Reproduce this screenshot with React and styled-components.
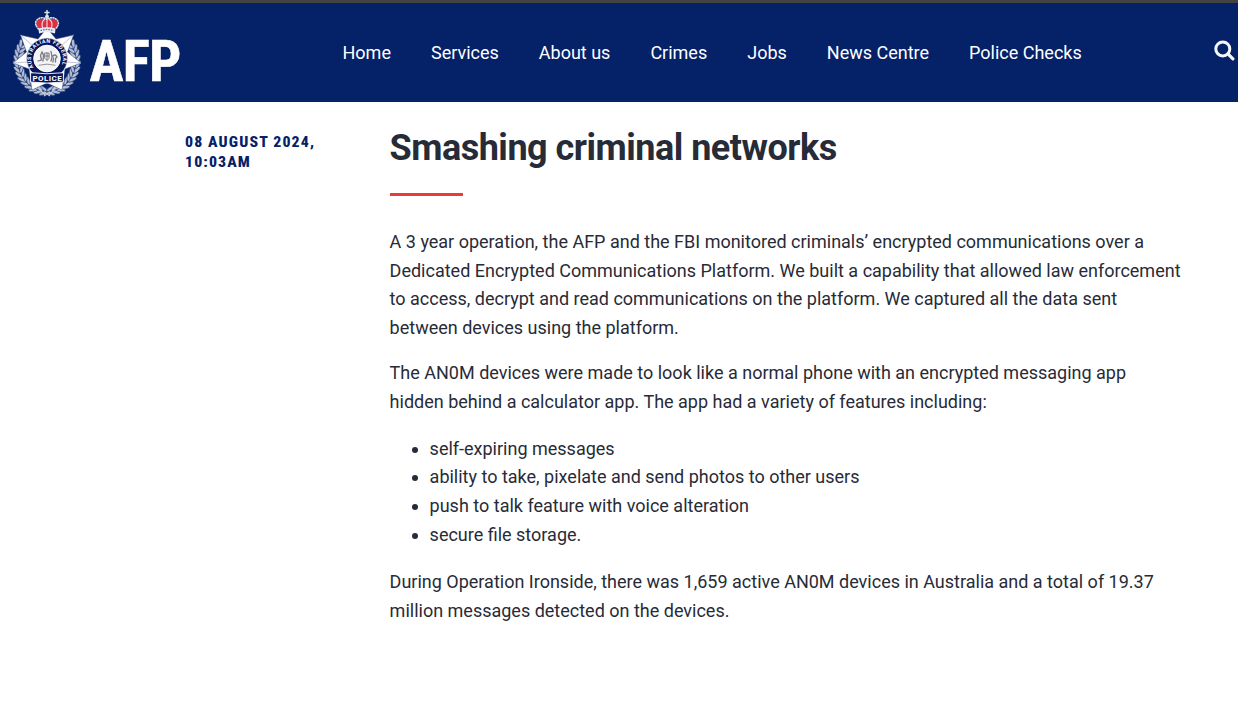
import React from "react";
import styled, { createGlobalStyle } from "styled-components";

const GlobalStyle = createGlobalStyle`
  * { box-sizing: border-box; }
  html, body { margin: 0; padding: 0; background: #fff; }
  body {
    font-family: Roboto, "Liberation Sans", sans-serif;
    font-size: 18px;
    line-height: 28.8px;
    color: #272b37;
    overflow: hidden;
  }
`;

const Header = styled.header`
  display: flex;
  align-items: center;
  height: 102px;
  background: #052168;
  border-top: 3px solid #434343;
`;

const Brand = styled.a`
  display: flex;
  flex: none;
  align-items: flex-start;
  width: 190px;
  height: 99px;
`;

const Wordmark = styled.span`
  margin: 26px 0 0 0.5px;
  color: #fff;
  font-family: "Roboto Condensed", Roboto, sans-serif;
  font-stretch: 75%;
  font-size: 57px;
  line-height: 66px;
  font-weight: 700;
  letter-spacing: -0.8px;
  -webkit-text-stroke: 0.5px #fff;
`;

const Nav = styled.nav`
  display: flex;
  flex: 1;
  gap: 40px;
  padding: 2px 0 0 152.5px;
`;

const NavLink = styled.a`
  color: #fff;
  white-space: nowrap;
`;

const SearchButton = styled.button`
  display: flex;
  flex: none;
  width: 24px;
  height: 24px;
  margin-top: -3px;
  padding: 1px 0 0 0;
  border: 0;
  background: none;
`;

const Page = styled.main`
  display: grid;
  grid-template-columns: 204.3px 800px;
  padding: 25px 0 0 185.3px;
`;

const Stamp = styled.p`
  margin: 0;
  padding-top: 5px;
  width: 176px;
  font-family: "Roboto Condensed", Roboto, sans-serif;
  font-stretch: 75%;
  font-size: 15px;
  line-height: 20px;
  font-weight: 800;
  letter-spacing: 1.05px;
  transform: scaleX(1.056);
  transform-origin: left top;
  text-transform: uppercase;
  color: #052168;
`;

const Title = styled.h1`
  margin: 0;
  font-size: 36px;
  line-height: 43px;
  font-weight: 700;
  letter-spacing: -0.5px;
`;

const Rule = styled.div`
  width: 73px;
  height: 3px;
  margin: 23px 0 31.8px 0.4px;
  background: #ec3b36;
`;

const Paragraph = styled.p`
  margin: 0 0 ${(p) => p.$gap || 16}px;
`;

const List = styled.ul`
  margin: 0 0 18px;
  padding-left: 40px;
`;

const Line = styled.span`
  display: block;
  white-space: nowrap;
`;

const leaves = [];
for (let i = 0; i < 13; i += 1) {
  const deg = 97 + i * 9.6;
  const a = (deg * Math.PI) / 180;
  leaves.push({ deg, cos: Math.cos(a), sin: Math.sin(a) });
}

function Laurel() {
  return leaves.map((l) => (
    <g key={l.deg}>
      <ellipse
        rx="4.6"
        ry="1.7"
        transform={`translate(${47 + l.cos * 31} ${61 + l.sin * 32.3}) rotate(${l.deg + 62})`}
      />
      <ellipse
        rx="4.4"
        ry="1.6"
        transform={`translate(${47 + l.cos * 26.5} ${61 + l.sin * 28}) rotate(${l.deg + 118})`}
      />
    </g>
  ));
}

function Crest() {
  return (
    <svg width="89" height="99" viewBox="0 3 89 99" aria-hidden="true">
      <defs>
        <path id="ring" d="M33.6 67.5 A16 16 0 1 1 60.4 67.5" />
      </defs>
      <g fill="#b4bfd5" stroke="#1b3474" strokeWidth="0.6">
        <Laurel />
        <g transform="translate(94 0) scale(-1 1)">
          <Laurel />
        </g>
      </g>
      <path
        d="M20.5 35 L38 39 L47 28 L56 39 L73.5 35 L67.5 52 L81 63 L65 69 L62 90 L47 83 L32 90 L29 69 L13 63 L26.5 52 Z"
        fill="#fff"
        stroke="#34497f"
        strokeWidth="0.5"
      />
      <path
        d="M20.5 35 L34 47 M73.5 35 L60 47 M13 63 L28 62 M81 63 L66 62"
        stroke="#aeb6cb"
        strokeWidth="0.8"
      />
      <circle cx="47" cy="58.5" r="20.4" fill="#07165a" stroke="#d9deea" strokeWidth="0.7" />
      <circle cx="47" cy="58.5" r="13.3" fill="#f3f3f5" stroke="#fff" strokeWidth="1" />
      <text fill="#fff" fontFamily="Roboto, sans-serif" fontSize="5.3" fontWeight="700">
        <textPath href="#ring" textLength="65" lengthAdjust="spacing">
          AUSTRALIAN FEDERAL
        </textPath>
      </text>
      <g fill="none" stroke="#777b82" strokeWidth="1" strokeLinecap="round">
        <path d="M38 61 L41.5 60 L40.5 55.5 L42 52 L43.5 55 L43 61" strokeWidth="1.3" />
        <path d="M45 53 h4 v5.5 l-2 2 l-2 -2 z M45 56 h4 M47 53 v7" />
        <path d="M51 61 L52 57 Q55 53 57 57 L55.5 58.5 L55.5 62 M52 57 L51 51.5 M53.5 58 L53 62" strokeWidth="1.3" />
        <path d="M39 65.2 Q47 63 55 65.2" strokeWidth="0.8" />
      </g>
      <path d="M30.6 72.7 Q47 74.8 63.4 72.7 L63.4 82 Q47 84.2 30.6 82 Z" fill="#07165a" stroke="#fff" strokeWidth="0.9" />
      <text
        x="32.4"
        y="81"
        fill="#fff"
        fontFamily="Roboto, sans-serif"
        fontSize="8"
        fontWeight="700"
        textLength="29.4"
        lengthAdjust="spacing"
      >
        POLICE
      </text>
      <path
        d="M38 88 L45 95 M56 88 L49 95 M44 96 L50 92 M50 96 L44 92"
        fill="none"
        stroke="#c3ccdd"
        strokeWidth="1.3"
      />
      <path d="M39 29.5 Q34.5 24 37 21 Q41 16.5 47 20 Q53 16.5 57 21 Q59.5 24 55 29.5 Z" fill="#e02e40" />
      <g fill="none" stroke="#dfe3ec" strokeLinecap="round">
        <path d="M38.5 29 Q34 24 36.5 20.5 Q41 15.5 47 19.5 Q53 15.5 57.5 20.5 Q60 24 55.5 29" strokeWidth="1.6" strokeDasharray="0.8 1.7" />
        <path d="M47 18 V28 M42.5 28 Q41 22 44.5 19.5 M51.5 28 Q53 22 49.5 19.5" strokeWidth="1.1" />
        <path d="M47 10.5 V17 M45 12.5 H49" strokeWidth="1.5" />
      </g>
      <circle cx="47" cy="16.8" r="2" fill="#dfe3ec" />
      <path d="M38.5 28.5 Q47 25.8 55.5 28.5 L55 33.4 Q47 31 39 33.4 Z" fill="#e6e9f1" />
      <path d="M40.5 30.5 Q47 28.4 53.5 30.5" fill="none" stroke="#66759d" strokeWidth="1.2" strokeDasharray="1.6 1" />
    </svg>
  );
}

function SearchIcon() {
  return (
    <svg width="21" height="21" viewBox="0 0 21 21" fill="none" stroke="#f4f6fb" strokeLinecap="round">
      <circle cx="8.8" cy="8.9" r="7" strokeWidth="3" />
      <path d="M14.2 14.2 L18.9 18.8" strokeWidth="3.2" />
    </svg>
  );
}

const links = ["Home", "Services", "About us", "Crimes", "Jobs", "News Centre", "Police Checks"];
const features = [
  "self-expiring messages",
  "ability to take, pixelate and send photos to other users",
  "push to talk feature with voice alteration",
  "secure file storage.",
];

export default function App() {
  return (
    <>
      <GlobalStyle />
      <Header>
        <Brand>
          <Crest />
          <Wordmark>AFP</Wordmark>
        </Brand>
        <Nav>
          {links.map((l) => (
            <NavLink key={l}>{l}</NavLink>
          ))}
        </Nav>
        <SearchButton aria-label="Search">
          <SearchIcon />
        </SearchButton>
      </Header>
      <Page>
        <Stamp>
          <Line>08 August 2024,</Line>
          <Line>10:03am</Line>
        </Stamp>
        <article>
          <Title>Smashing criminal networks</Title>
          <Rule />
          <Paragraph>
            <Line>A 3 year operation, the AFP and the FBI monitored criminals’ encrypted communications over a</Line>
            <Line>Dedicated Encrypted Communications Platform. We built a capability that allowed law enforcement</Line>
            <Line>to access, decrypt and read communications on the platform. We captured all the data sent</Line>
            <Line>between devices using the platform.</Line>
          </Paragraph>
          <Paragraph $gap={18}>
            <Line>The AN0M devices were made to look like a normal phone with an encrypted messaging app</Line>
            <Line>hidden behind a calculator app. The app had a variety of features including:</Line>
          </Paragraph>
          <List>
            {features.map((f) => (
              <li key={f}>{f}</li>
            ))}
          </List>
          <Paragraph>
            <Line>During Operation Ironside, there was 1,659 active AN0M devices in Australia and a total of 19.37</Line>
            <Line>million messages detected on the devices.</Line>
          </Paragraph>
        </article>
      </Page>
    </>
  );
}
